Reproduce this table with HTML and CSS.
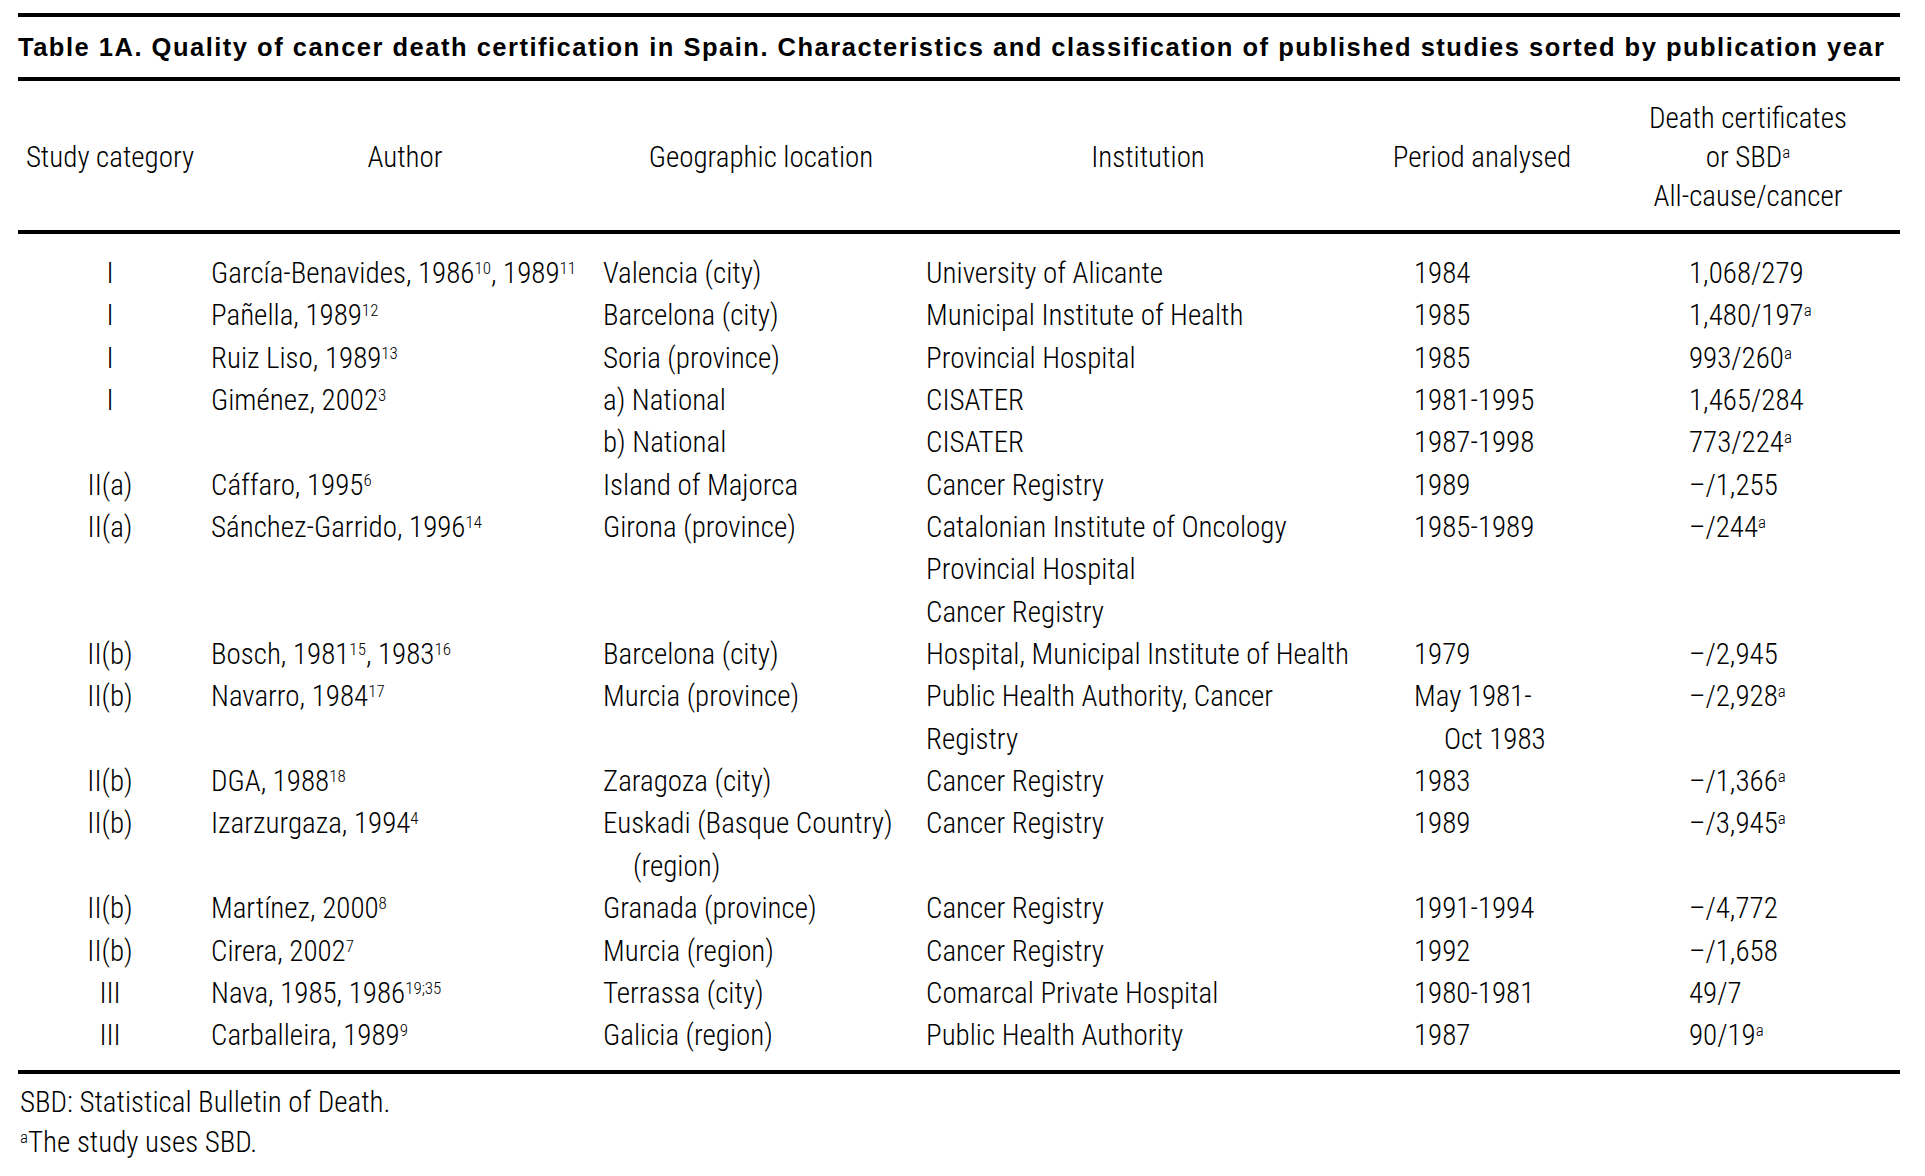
FILE: index.html
```html
<!DOCTYPE html>
<html lang="en">
<head>
<meta charset="utf-8">
<title>Table 1A</title>
<link rel="stylesheet" href="styles.css">
</head>
<body>
<div class="page">
  <div class="rule"></div>
  <h1 class="title">Table 1A. Quality of cancer death certification in Spain. Characteristics and classification of published studies sorted by publication year</h1>
  <div class="rule"></div>
  <div class="head">
    <div class="hcell">Study category</div>
    <div class="hcell">Author</div>
    <div class="hcell">Geographic location</div>
    <div class="hcell">Institution</div>
    <div class="hcell">Period analysed</div>
    <div class="hcell hlast">Death certificates<br>or SBD<sup>a</sup><br>All-cause/cancer</div>
  </div>
  <div class="rule"></div>
  <div class="body">
    <div class="cat">I</div><div class="cell">García-Benavides, 1986<sup>10</sup>, 1989<sup>11</sup></div><div class="cell">Valencia (city)</div><div class="cell">University of Alicante</div><div class="cell">1984</div><div class="cell">1,068/279</div>

    <div class="cat">I</div><div class="cell">Pañella, 1989<sup>12</sup></div><div class="cell">Barcelona (city)</div><div class="cell">Municipal Institute of Health</div><div class="cell">1985</div><div class="cell">1,480/197<sup>a</sup></div>

    <div class="cat">I</div><div class="cell">Ruiz Liso, 1989<sup>13</sup></div><div class="cell">Soria (province)</div><div class="cell">Provincial Hospital</div><div class="cell">1985</div><div class="cell">993/260<sup>a</sup></div>

    <div class="cat">I</div><div class="cell">Giménez, 2002<sup>3</sup></div><div class="cell">a) National</div><div class="cell">CISATER</div><div class="cell">1981-1995</div><div class="cell">1,465/284</div>

    <div class="cat"></div><div class="cell"></div><div class="cell">b) National</div><div class="cell">CISATER</div><div class="cell">1987-1998</div><div class="cell">773/224<sup>a</sup></div>

    <div class="cat">II(a)</div><div class="cell">Cáffaro, 1995<sup>6</sup></div><div class="cell">Island of Majorca</div><div class="cell">Cancer Registry</div><div class="cell">1989</div><div class="cell">–/1,255</div>

    <div class="cat">II(a)</div><div class="cell">Sánchez-Garrido, 1996<sup>14</sup></div><div class="cell">Girona (province)</div><div class="cell">Catalonian Institute of Oncology<br>Provincial Hospital<br>Cancer Registry</div><div class="cell">1985-1989</div><div class="cell">–/244<sup>a</sup></div>

    <div class="cat">II(b)</div><div class="cell">Bosch, 1981<sup>15</sup>, 1983<sup>16</sup></div><div class="cell">Barcelona (city)</div><div class="cell">Hospital, Municipal Institute of Health</div><div class="cell">1979</div><div class="cell">–/2,945</div>

    <div class="cat">II(b)</div><div class="cell">Navarro, 1984<sup>17</sup></div><div class="cell">Murcia (province)</div><div class="cell">Public Health Authority, Cancer<br>Registry</div><div class="cell">May 1981-<br><span class="indent">Oct 1983</span></div><div class="cell">–/2,928<sup>a</sup></div>

    <div class="cat">II(b)</div><div class="cell">DGA, 1988<sup>18</sup></div><div class="cell">Zaragoza (city)</div><div class="cell">Cancer Registry</div><div class="cell">1983</div><div class="cell">–/1,366<sup>a</sup></div>

    <div class="cat">II(b)</div><div class="cell">Izarzurgaza, 1994<sup>4</sup></div><div class="cell">Euskadi (Basque Country)<br><span class="indent">(region)</span></div><div class="cell">Cancer Registry</div><div class="cell">1989</div><div class="cell">–/3,945<sup>a</sup></div>

    <div class="cat">II(b)</div><div class="cell">Martínez, 2000<sup>8</sup></div><div class="cell">Granada (province)</div><div class="cell">Cancer Registry</div><div class="cell">1991-1994</div><div class="cell">–/4,772</div>

    <div class="cat">II(b)</div><div class="cell">Cirera, 2002<sup>7</sup></div><div class="cell">Murcia (region)</div><div class="cell">Cancer Registry</div><div class="cell">1992</div><div class="cell">–/1,658</div>

    <div class="cat">III</div><div class="cell">Nava, 1985, 1986<sup>19;35</sup></div><div class="cell">Terrassa (city)</div><div class="cell">Comarcal Private Hospital</div><div class="cell">1980-1981</div><div class="cell">49/7</div>

    <div class="cat">III</div><div class="cell">Carballeira, 1989<sup>9</sup></div><div class="cell">Galicia (region)</div><div class="cell">Public Health Authority</div><div class="cell">1987</div><div class="cell">90/19<sup>a</sup></div>
  </div>
  <div class="rule"></div>
  <div class="notes">
    <p class="note">SBD: Statistical Bulletin of Death.</p>
    <p class="note"><sup>a</sup>The study uses SBD.</p>
  </div>
</div>
</body>
</html>
```
FILE: styles.css
```css
html, body {
  margin: 0;
  padding: 0;
  background: #fff;
}

body {
  color: #000;
  font-family: "Roboto", "Liberation Sans", sans-serif;
  font-stretch: 75%;
  font-weight: 300;
  font-size: 29px;
}

.page {
  width: 1882px;
  padding: 13px 0 0 18px;
}

.rule {
  height: 4px;
  background: #000;
}

.title {
  margin: 0;
  height: 60px;
  line-height: 60px;
  font-family: "Liberation Sans", Arial, sans-serif;
  font-stretch: normal;
  font-weight: 700;
  font-size: 25.5px;
  letter-spacing: 1.5px;
  white-space: nowrap;
}

.head {
  display: grid;
  grid-template-columns: 184px 406px 306px 468px 200px 318px;
  padding: 17.5px 0 14.5px;
  line-height: 39px;
}

.hcell {
  align-self: center;
  text-align: center;
  white-space: nowrap;
}

.hlast {
  padding-left: 14px;
}

.body {
  display: grid;
  grid-template-columns: 193px 392px 323px 488px 275px 211px;
  padding: 18px 0 13.35px;
  line-height: 42.35px;
}

.cat {
  text-align: center;
  padding-right: 9px;
}

.cell {
  white-space: nowrap;
}

.indent {
  padding-left: 30px;
}

sup {
  font-size: 17px;
  line-height: 0;
  vertical-align: 9px;
}

.notes {
  padding-top: 8.5px;
}

.note {
  margin: 0;
  line-height: 40px;
  white-space: nowrap;
  padding-left: 2px;
}
```
